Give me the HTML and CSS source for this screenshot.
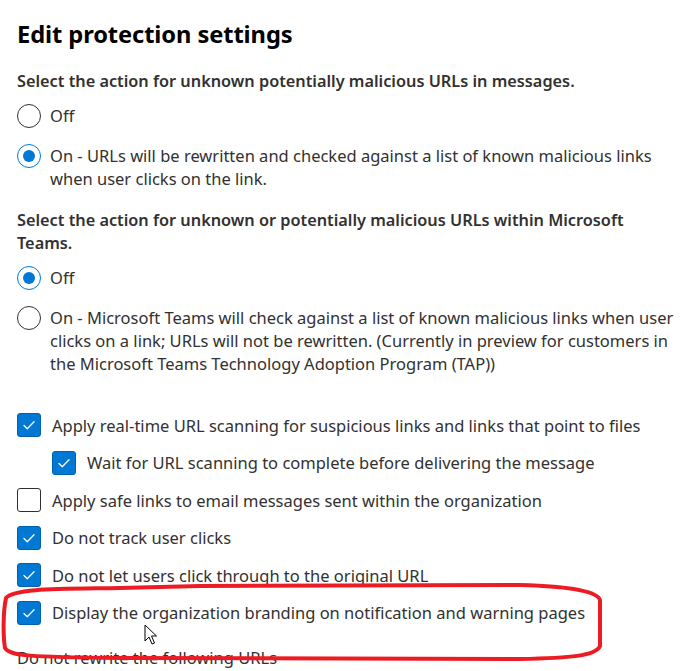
FILE: index.html
```html
<!DOCTYPE html>
<html lang="en">
<head>
<meta charset="utf-8">
<title>Edit protection settings</title>
<link rel="stylesheet" href="styles.css">
</head>
<body>
<main class="panel">
  <h1 class="title">Edit protection settings</h1>

  <section class="group group-first">
    <p class="label">Select the action for unknown potentially malicious URLs in messages.</p>
    <div class="radio-row">
      <span class="radio"></span>
      <span class="text">Off</span>
    </div>
    <div class="radio-row">
      <span class="radio checked"></span>
      <span class="text">On - URLs will be rewritten and checked against a list of known malicious links when user clicks on the link.</span>
    </div>
  </section>

  <section class="group group-second">
    <p class="label">Select the action for unknown or potentially malicious URLs within Microsoft Teams.</p>
    <div class="radio-row">
      <span class="radio checked"></span>
      <span class="text">Off</span>
    </div>
    <div class="radio-row">
      <span class="radio"></span>
      <span class="text">On - Microsoft Teams will check against a list of known malicious links when user clicks on a link; URLs will not be rewritten. (Currently in preview for customers in the Microsoft Teams Technology Adoption Program (TAP))</span>
    </div>
  </section>

  <section class="checks">
    <div class="check-row">
      <span class="box on"><svg viewBox="0 0 24 24"><path d="M6.5 12.5l3.6 3.6 7.4-7.6"/></svg></span>
      <span class="text">Apply real-time URL scanning for suspicious links and links that point to files</span>
    </div>
    <div class="check-row nested">
      <span class="box on"><svg viewBox="0 0 24 24"><path d="M6.5 12.5l3.6 3.6 7.4-7.6"/></svg></span>
      <span class="text">Wait for URL scanning to complete before delivering the message</span>
    </div>
    <div class="check-row">
      <span class="box"></span>
      <span class="text">Apply safe links to email messages sent within the organization</span>
    </div>
    <div class="check-row">
      <span class="box on"><svg viewBox="0 0 24 24"><path d="M6.5 12.5l3.6 3.6 7.4-7.6"/></svg></span>
      <span class="text">Do not track user clicks</span>
    </div>
    <div class="check-row">
      <span class="box on"><svg viewBox="0 0 24 24"><path d="M6.5 12.5l3.6 3.6 7.4-7.6"/></svg></span>
      <span class="text">Do not let users click through to the original URL</span>
    </div>
    <div class="check-row">
      <span class="box on"><svg viewBox="0 0 24 24"><path d="M6.5 12.5l3.6 3.6 7.4-7.6"/></svg></span>
      <span class="text">Display the organization branding on notification and warning pages</span>
    </div>
    <p class="subhead">Do not rewrite the following URLs</p>
  </section>
</main>

<svg class="highlight" width="688" height="671" viewBox="0 0 688 671" aria-hidden="true">
  <path d="M120 588 C 60 589, 14 588, 6 598 C 3 612, 3 636, 5 648 C 10 656, 30 657, 120 658 L 520 659 C 570 658, 596 656, 600 646 L 600 600 C 597 590, 560 586, 520 585 L 200 586 Z" />
</svg>

<svg class="cursor" width="14" height="22" viewBox="0 0 14 22" aria-hidden="true">
  <path d="M1 1 L1 17 L5 13 L8 20 L10.5 19 L7.5 12 L12.5 12 Z"/>
</svg>
</body>
</html>
```

FILE: styles.css
```css
html, body {
  margin: 0;
  padding: 0;
  background: #ffffff;
}

body {
  font-family: "Noto Sans", "Open Sans", sans-serif;
  color: #323130;
  width: 688px;
  height: 671px;
  overflow: hidden;
  position: relative;
}

.panel {
  padding: 18px 0 0 17px;
}

.title {
  margin: 0;
  font-size: 23.7px;
  line-height: 32px;
  font-weight: 700;
  color: #000000;
  letter-spacing: -0.1px;
}

.group {
  display: flex;
  flex-direction: column;
}

.group-first {
  margin-top: 20px;
}

.group-second {
  margin-top: 3px;
}

.label {
  margin: 0 0 11px 0;
  font-size: 16.3px;
  line-height: 23px;
  font-weight: 600;
  color: #323130;
  width: 630px;
}

.radio-row {
  display: flex;
  align-items: flex-start;
  gap: 9px;
  margin-bottom: 16px;
  font-size: 16.5px;
  line-height: 23px;
}

.radio-row .text {
  width: 630px;
}

.radio {
  flex: 0 0 auto;
  border: 1px solid #323130;
  border-radius: 50%;
  box-sizing: border-box;
  width: 24px;
  height: 24px;
  position: relative;
  background: #ffffff;
}

.radio.checked {
  border-color: #0078d4;
}

.radio.checked::after {
  content: "";
  position: absolute;
  left: 50%;
  top: 50%;
  width: 12px;
  height: 12px;
  margin: -6px 0 0 -6px;
  border-radius: 50%;
  background: #0078d4;
}

.checks {
  margin-top: 22px;
  display: flex;
  flex-direction: column;
}

.check-row {
  display: flex;
  align-items: center;
  gap: 11px;
  height: 24px;
  margin-bottom: 13.5px;
  font-size: 16.5px;
  line-height: 23px;
}

.check-row.nested {
  padding-left: 35px;
}

.box {
  flex: 0 0 auto;
  width: 24px;
  height: 24px;
  box-sizing: border-box;
  border: 1px solid #323130;
  border-radius: 3px;
  background: #ffffff;
  display: flex;
  align-items: center;
  justify-content: center;
}

.box.on {
  background: #0078d4;
  border-color: #0062ad;
}

.box svg {
  width: 24px;
  height: 24px;
}

.box svg path {
  fill: none;
  stroke: #ffffff;
  stroke-width: 1.4;
  stroke-linecap: round;
  stroke-linejoin: round;
}

.subhead {
  margin: 8px 0 0 0;
  font-size: 16.5px;
  line-height: 23px;
  color: #323130;
}

.highlight {
  position: absolute;
  left: 0;
  top: 0;
  pointer-events: none;
}

.highlight path {
  fill: none;
  stroke: #ed1c24;
  stroke-width: 4;
}

.cursor {
  position: absolute;
  left: 144px;
  top: 624px;
}

.cursor path {
  fill: #ffffff;
  stroke: #000000;
  stroke-width: 1;
  stroke-linejoin: round;
}
```
